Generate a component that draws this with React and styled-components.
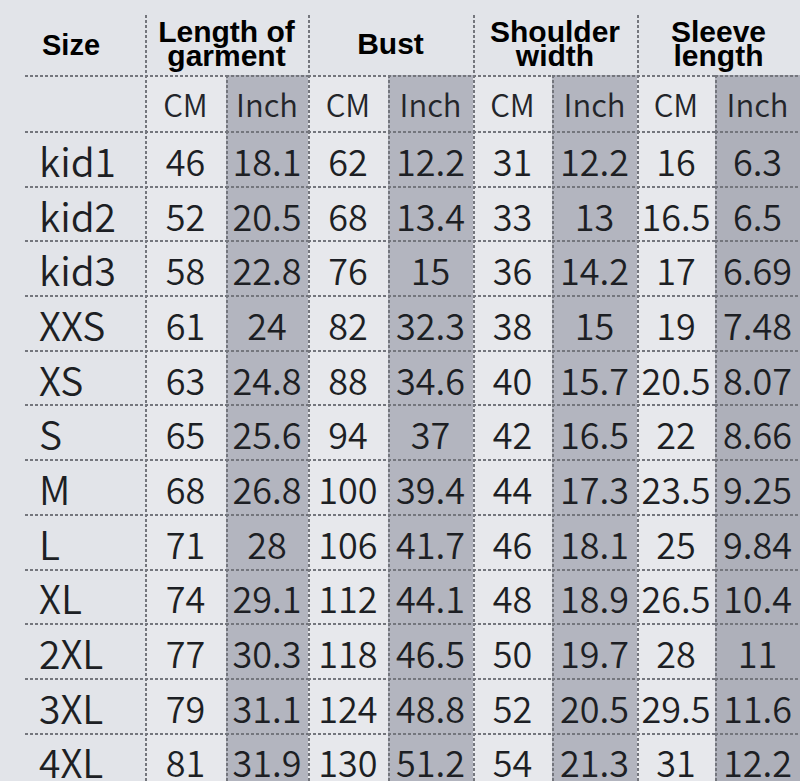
import styled, { createGlobalStyle, css } from "styled-components";

const GlobalStyle = createGlobalStyle`
  html, body {
    margin: 0;
    padding: 0;
    background: #e2e4e9;
  }
`;

const rows = [
  ["kid1", 46, 18.1, 62, 12.2, 31, 12.2, 16, 6.3],
  ["kid2", 52, 20.5, 68, 13.4, 33, 13, 16.5, 6.5],
  ["kid3", 58, 22.8, 76, 15, 36, 14.2, 17, 6.69],
  ["XXS", 61, 24, 82, 32.3, 38, 15, 19, 7.48],
  ["XS", 63, 24.8, 88, 34.6, 40, 15.7, 20.5, 8.07],
  ["S", 65, 25.6, 94, 37, 42, 16.5, 22, 8.66],
  ["M", 68, 26.8, 100, 39.4, 44, 17.3, 23.5, 9.25],
  ["L", 71, 28, 106, 41.7, 46, 18.1, 25, 9.84],
  ["XL", 74, 29.1, 112, 44.1, 48, 18.9, 26.5, 10.4],
  ["2XL", 77, 30.3, 118, 46.5, 50, 19.7, 28, 11],
  ["3XL", 79, 31.1, 124, 48.8, 52, 20.5, 29.5, 11.6],
  ["4XL", 81, 31.9, 130, 51.2, 54, 21.3, 31, 12.2],
];

const groups = [
  ["Length of", "garment"],
  ["Bust"],
  ["Shoulder", "width"],
  ["Sleeve", "length"],
];

// dashed lines drawn as gradients so the dash length can be set
const dashTop = "repeating-linear-gradient(90deg, #74767d 0 3px, transparent 3px 5px) top left / 100% 2px no-repeat";
const dashLeft = "repeating-linear-gradient(180deg, #74767d 0 3px, transparent 3px 5px) top left / 2px 100% no-repeat";

const Page = styled.div`
  width: 800px;
  height: 781px;
  overflow: hidden;
  background: #e2e4e9;
`;

const Table = styled.div`
  display: grid;
  grid-template-columns: 120px 81px 82px 80px 85px 79px 85px 78px 85px;
  grid-template-rows: 60px 56px repeat(12, 54.7px);
  padding: 15px 0 0 25px;
`;

const SizeHead = styled.div`
  display: flex;
  align-items: center;
  padding: 0 0 0 17px;
  font-family: "Liberation Sans", Arial, sans-serif;
  font-weight: bold;
  font-size: 29px;
  color: #000;
`;

const GroupHead = styled.div`
  grid-column: span 2;
  display: flex;
  flex-direction: column;
  align-items: center;
  justify-content: center;
  padding-bottom: 2px;
  background: ${dashLeft};
  font-family: "Liberation Sans", Arial, sans-serif;
  font-weight: bold;
  font-size: 30px;
  line-height: 24px;
  color: #000;
  text-align: center;
`;

const cellFill = ({ $inch, $last }) =>
  $inch ? ($last ? "#aeb0ba" : "#b3b5bf") : "#e7e8ec";

const Cell = styled.div`
  display: flex;
  align-items: center;
  justify-content: center;
  padding-top: 3px;
  background: ${dashTop}, ${dashLeft}, ${cellFill};
  font-family: "Noto Sans CJK SC", "Noto Sans", sans-serif;
  font-weight: 350;
  font-size: 36px;
  color: #1d1f24;
  ${({ $unit }) =>
    $unit &&
    css`
      font-size: 31px;
      color: #23252a;
      padding-top: 0;
    `}
`;

const SizeCell = styled.div`
  display: flex;
  align-items: center;
  padding: 3px 0 0 14px;
  background: ${dashTop}, #e2e4e9;
  font-family: "Noto Sans CJK SC", "Noto Sans", sans-serif;
  font-weight: 350;
  font-size: 39px;
  color: #1d1f24;
`;

const Line = styled.span`
  display: block;
`;

export default function App() {
  return (
    <Page>
      <GlobalStyle />
      <Table>
        <SizeHead>Size</SizeHead>
        {groups.map((g, i) => (
          <GroupHead key={i}>
            {g.map((t) => (
              <Line key={t}>{t}</Line>
            ))}
          </GroupHead>
        ))}

        <SizeCell />
        {[0, 1, 2, 3].map((i) => [
          <Cell key={"c" + i} $unit>CM</Cell>,
          <Cell key={"i" + i} $unit $inch $last={i === 3}>
            Inch
          </Cell>,
        ])}

        {rows.map((r) => [
          <SizeCell key={r[0]}>{r[0]}</SizeCell>,
          ...r.slice(1).map((v, j) => (
            <Cell key={r[0] + j} $inch={j % 2 === 1} $last={j === 7}>
              {v}
            </Cell>
          )),
        ])}
      </Table>
    </Page>
  );
}
